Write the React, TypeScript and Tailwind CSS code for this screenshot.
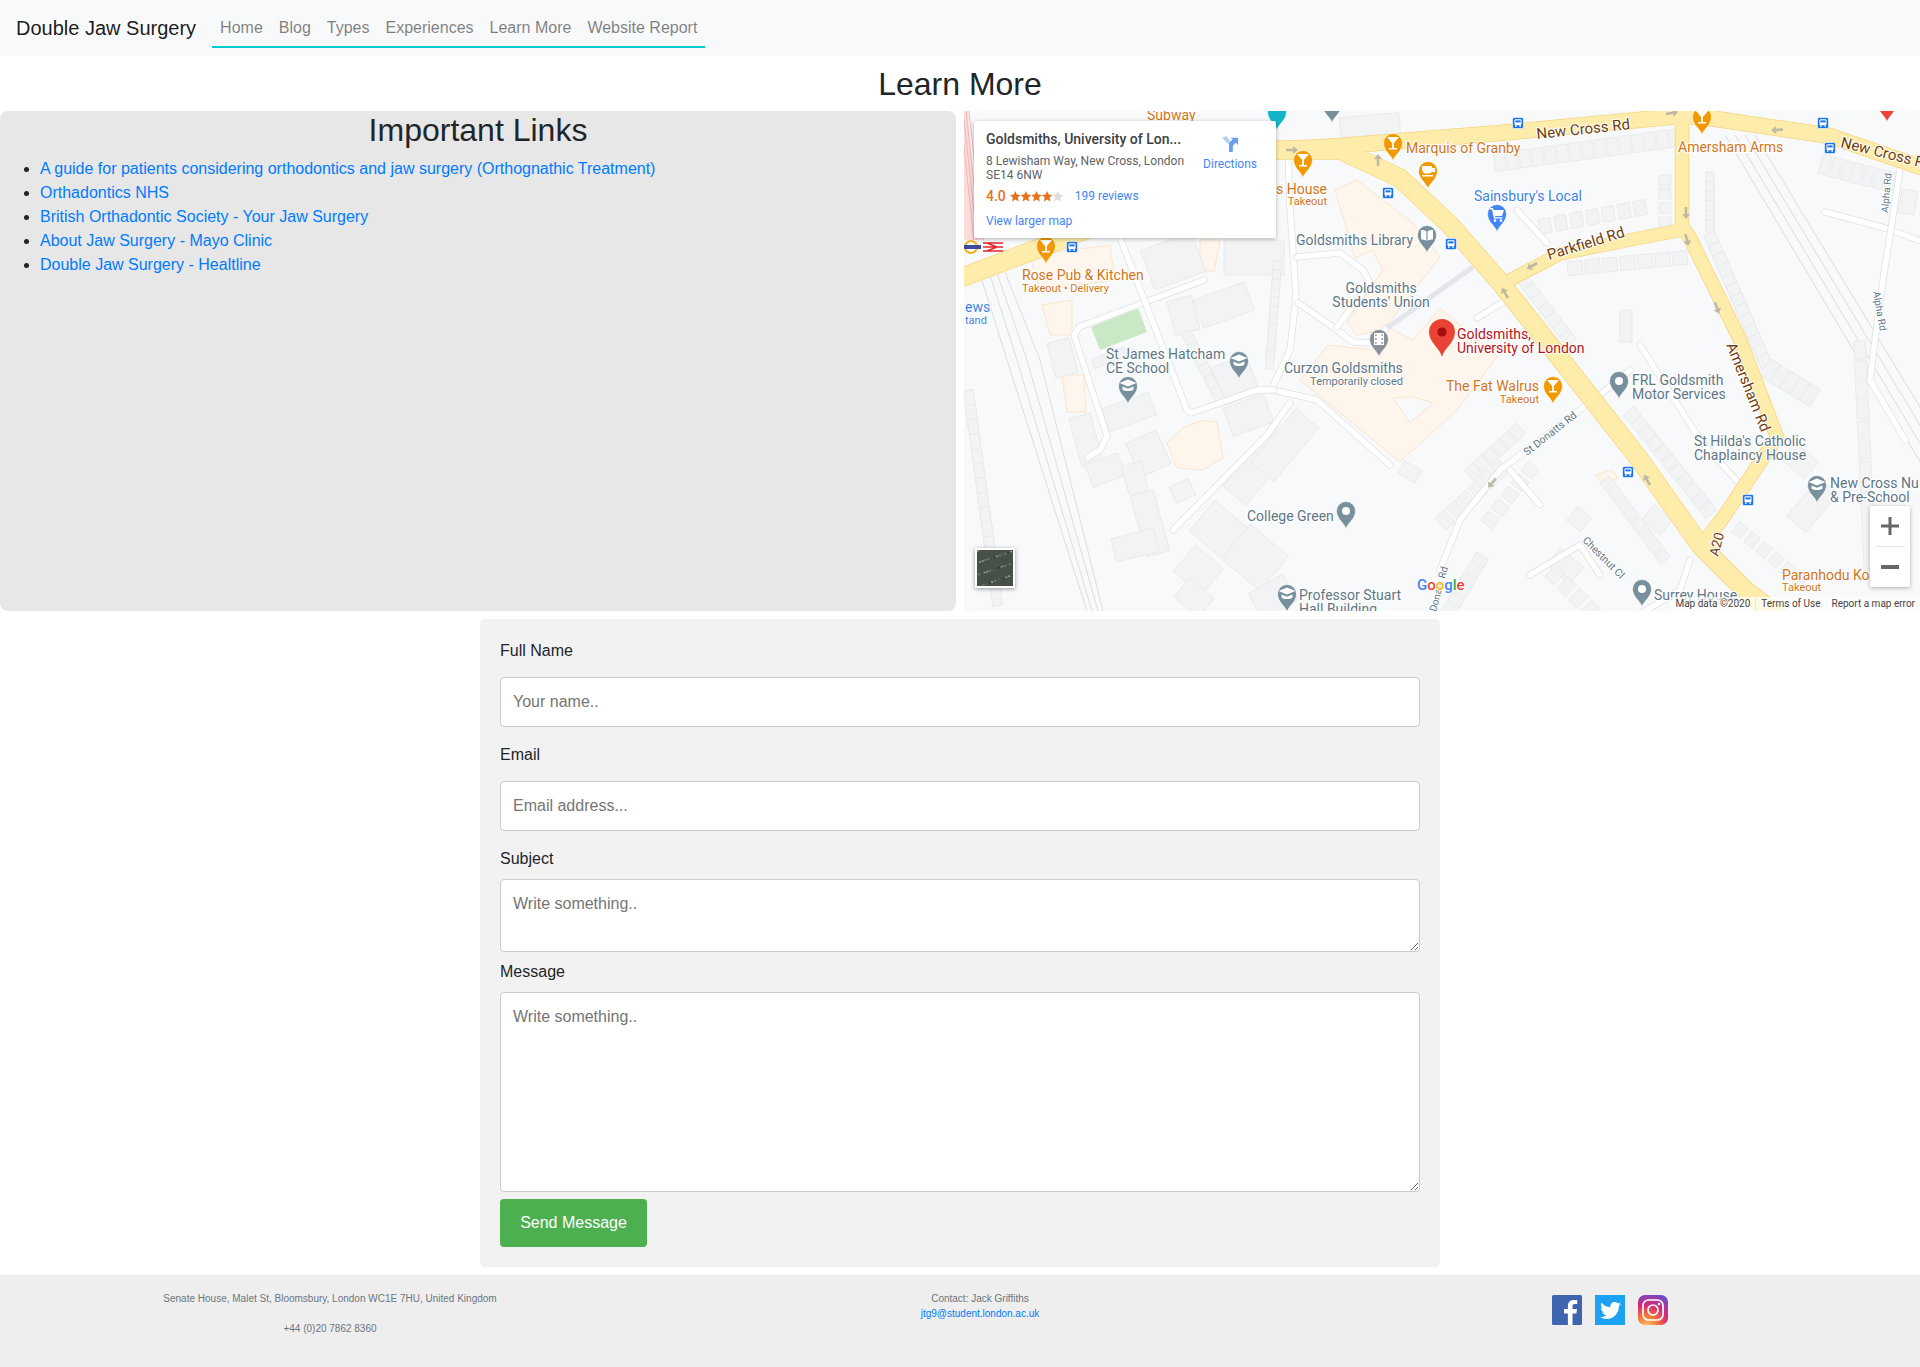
import React from "react";
import { FaTwitter } from "react-icons/fa";

const navLinks = ["Home", "Blog", "Types", "Experiences", "Learn More", "Website Report"];

const importantLinks = [
  "A guide for patients considering orthodontics and jaw surgery (Orthognathic Treatment)",
  "Orthadontics NHS",
  "British Orthadontic Society - Your Jaw Surgery",
  "About Jaw Surgery - Mayo Clinic",
  "Double Jaw Surgery - Healtline",
];

// Map colours
const ORANGE = "#d0761a";
const SLATE = "#5e7686";
const BROWN = "#6f3c0d";
const ROAD = "#feedaa";
const ROAD_EDGE = "#f6d382";
const PIN_ORANGE = "#f29900";
const PIN_SLATE = "#78909c";
const PEACH = "#fef5ec";
const PEACH_EDGE = "#fbe5cc";

const yellowRoads = [
  { d: "M955,280 L1045,246 L1110,220 L1270,150 L1340,150 L1400,178 L1450,225 L1500,282 L1640,460 L1700,545 L1745,590 L1800,632", w: 18 },
  { d: "M1270,150 L1340,146 L1500,133 L1680,116 L1710,118 L1830,136 L1935,172", w: 15 },
  { d: "M1682,118 L1682,226 L1690,238 L1740,340 L1777,437 L1725,515 L1700,548", w: 13 },
  { d: "M1500,285 L1560,254 L1640,238 L1682,230", w: 12 },
];

const whiteStreets = [
  "M1288,150 L1290,207 L1296,297 L1290,350 L1272,388",
  "M1298,303 L1333,327 L1353,342 L1373,343 L1387,328",
  "M1297,257 L1340,253 L1363,270 L1370,283 L1337,327",
  "M1273,390 L1317,400 L1390,465",
  "M1290,403 L1267,435 L1173,530",
  "M1477,318 L1503,302",
  "M1517,210 L1547,243",
  "M1204,280 L1079,327 L1074,335 L1107,436 L1100,450 L1088,457",
  "M1121,240 L1187,410 L1191,413 L1257,390 L1274,390",
  "M1440,570 L1460,520 L1500,470 L1600,395 L1630,370",
  "M1510,470 L1540,505",
  "M1530,575 L1580,545 L1600,575",
  "M1640,345 L1700,440 L1745,490",
  "M1825,212 L1885,228 L1935,246",
  "M1900,170 L1880,300 L1870,380 L1905,440",
  "M1690,560 L1680,590 L1630,620",
];

const railLines = [
  "M981,277 L1007,360 L1087,611",
  "M990,275 L1017,360 L1092,611",
  "M997,273 L1027,360 L1098,611",
  "M1005,272 L1040,360 L1103,611",
  "M1725,135 L1925,470",
  "M1735,135 L1930,460",
  "M1745,135 L1935,450",
  "M1755,135 L1940,440",
];

const terraces = [
  { x1: 1500, y1: 162, x2: 1675, y2: 138, n: 15, w: 11, h: 18 },
  { x1: 1545, y1: 226, x2: 1640, y2: 208, n: 7, w: 12, h: 15 },
  { x1: 1575, y1: 268, x2: 1680, y2: 258, n: 7, w: 15, h: 14 },
  { x1: 1710, y1: 182, x2: 1710, y2: 230, n: 6, w: 20, h: 8 },
  { x1: 1712, y1: 240, x2: 1765, y2: 362, n: 13, w: 14, h: 12 },
  { x1: 1665, y1: 180, x2: 1665, y2: 222, n: 4, w: 10, h: 12 },
  { x1: 1825, y1: 165, x2: 1890, y2: 182, n: 7, w: 9, h: 20 },
  { x1: 1525, y1: 282, x2: 1568, y2: 338, n: 7, w: 12, h: 12 },
  { x1: 1632, y1: 415, x2: 1708, y2: 510, n: 11, w: 11, h: 14 },
  { x1: 1608, y1: 484, x2: 1662, y2: 556, n: 8, w: 11, h: 12 },
  { x1: 1473, y1: 472, x2: 1517, y2: 432, n: 6, w: 11, h: 14 },
  { x1: 1445, y1: 520, x2: 1500, y2: 470, n: 6, w: 12, h: 16 },
  { x1: 1490, y1: 520, x2: 1530, y2: 470, n: 5, w: 12, h: 14 },
  { x1: 1450, y1: 610, x2: 1480, y2: 560, n: 6, w: 10, h: 14 },
  { x1: 1740, y1: 530, x2: 1800, y2: 580, n: 6, w: 11, h: 13 },
  { x1: 1770, y1: 370, x2: 1810, y2: 395, n: 5, w: 12, h: 20 },
  { x1: 970, y1: 403, x2: 996, y2: 593, n: 14, w: 26, h: 10 },
  { x1: 1277, y1: 270, x2: 1270, y2: 360, n: 11, w: 18, h: 8 },
  { x1: 1190, y1: 340, x2: 1218, y2: 395, n: 6, w: 18, h: 10 },
  { x1: 1555, y1: 575, x2: 1590, y2: 610, n: 4, w: 12, h: 16 },
  { x1: 1860, y1: 350, x2: 1870, y2: 570, n: 12, w: 18, h: 12 },
];

// x, y, w, h, rotation
const blocks = [
  [1051, 340, 23, 36, -15],
  [1075, 415, 22, 50, -15],
  [1104, 400, 50, 24, -20],
  [1092, 353, 35, 10, -20],
  [1171, 298, 25, 35, -15],
  [1197, 290, 54, 30, -20],
  [1146, 240, 54, 42, -20],
  [1224, 240, 60, 35, 0],
  [1217, 360, 37, 40, -20],
  [1227, 400, 43, 30, -20],
  [1132, 435, 33, 37, -25],
  [1088, 458, 35, 24, -20],
  [1125, 463, 20, 30, -15],
  [1138, 492, 24, 63, -15],
  [1113, 533, 44, 24, -15],
  [1172, 482, 21, 18, -25],
  [1245, 425, 30, 80, 40],
  [1270, 410, 30, 70, 40],
  [1195, 515, 60, 40, 40],
  [1230, 535, 50, 45, 40],
  [1180, 553, 37, 34, 40],
  [1178, 585, 32, 25, 40],
  [1253, 582, 40, 30, -30],
  [1400, 465, 20, 14, 30],
  [1800, 480, 25, 50, 40],
  [1785, 450, 30, 22, 40],
  [1900, 190, 16, 24, 10],
  [1620, 310, 12, 32, 0],
  [1660, 180, 10, 10, 0],
  [1340, 115, 60, 25, -5],
  [1550, 555, 30, 22, 40],
  [1645, 510, 24, 20, 40],
  [1570, 510, 18, 18, 40],
];

const busStops = [
  [1388, 193],
  [1072, 247],
  [1518, 123],
  [1823, 123],
  [1830, 148],
  [1451, 244],
  [1628, 472],
  [1748, 500],
];

const arrows = [
  [1686, 213, 180],
  [1687, 240, 165],
  [1717, 308, 160],
  [1532, 266, 240],
  [1505, 293, 330],
  [1647, 480, 330],
  [1777, 130, 265],
  [1672, 113, 80],
  [1378, 160, 0],
  [1292, 150, 90],
  [1492, 483, 220],
];

type TextProps = {
  x: number;
  y: number;
  fill?: string;
  size?: number;
  anchor?: "start" | "middle" | "end";
  weight?: number;
  rotate?: number;
  children: React.ReactNode;
};

const MapText = ({ x, y, fill = SLATE, size = 14, anchor = "start", weight = 400, rotate = 0, children }: TextProps) => (
  <text
    x={x}
    y={y}
    fill={fill}
    fontSize={size}
    fontWeight={weight}
    textAnchor={anchor}
    stroke="#fff"
    strokeWidth={2}
    paintOrder="stroke"
    strokeLinejoin="round"
    transform={rotate ? `rotate(${rotate} ${x} ${y})` : undefined}
  >
    {children}
  </text>
);

type Glyph = "dot" | "martini" | "cup" | "cap" | "book" | "film" | "cart" | "none";

const Pin = ({ x, y, color, glyph = "dot" }: { x: number; y: number; color: string; glyph?: Glyph }) => (
  <g transform={`translate(${x} ${y})`}>
    <path
      d="M0 0 C-1.5 -6 -9.5 -10 -9.5 -18 A9.5 9.5 0 1 1 9.5 -18 C9.5 -10 1.5 -6 0 0 Z"
      fill={color}
      stroke="#fff"
      strokeWidth={0.6}
    />
    {glyph === "dot" && <circle cx={0} cy={-18} r={4} fill="#fff" />}
    {glyph === "martini" && <path d="M-6 -24 H6 L0.9 -18 V-13 H4 V-11.5 H-4 V-13 H-0.9 V-18 Z" fill="#fff" />}
    {glyph === "cup" && <path d="M-6 -23 H4 V-21 H7 V-17 H3.5 C3 -16 2 -15.5 0 -15.5 H-2 C-5 -15.5 -6 -18 -6 -20 Z M-6 -14 H5 V-12.5 H-6 Z" fill="#fff" />}
    {glyph === "cap" && <path d="M0 -24.5 L8.5 -21 L0 -17.5 L-8.5 -21 Z M-5.5 -17.5 L0 -15.2 L5.5 -17.5 V-14.5 C3 -12.5 -3 -12.5 -5.5 -14.5 Z" fill="#fff" />}
    {glyph === "book" && <path d="M-6 -23 C-3 -23 -1 -22.5 -0.6 -21.5 V-12 C-1.5 -13 -3.5 -13.5 -6 -13.5 Z M6 -23 C3 -23 1 -22.5 0.6 -21.5 V-12 C1.5 -13 3.5 -13.5 6 -13.5 Z" fill="#fff" />}
    {glyph === "film" && <path d="M-5 -24 H5 V-12 H-5 Z M-3.8 -22.8 V-21 H-2.4 V-22.8 Z M2.4 -22.8 V-21 H3.8 V-22.8 Z M-3.8 -19 V-17 H-2.4 V-19 Z M2.4 -19 V-17 H3.8 V-19 Z M-3.8 -15 V-13.2 H-2.4 V-15 Z M2.4 -15 V-13.2 H3.8 V-15 Z" fill="#fff" fillRule="evenodd" />}
    {glyph === "cart" && <path d="M-7 -24 H-4 L-3.4 -22 H7 L5 -16 H-2 L-1.6 -14.8 H5.5 V-13.4 H-3 L-5 -22.6 H-7 Z M-2 -12.8 A1.4 1.4 0 1 0 -2 -10 A1.4 1.4 0 1 0 -2 -12.8 Z M4 -12.8 A1.4 1.4 0 1 0 4 -10 A1.4 1.4 0 1 0 4 -12.8 Z" fill="#fff" />}
  </g>
);

const BusStop = ({ x, y }: { x: number; y: number }) => (
  <g transform={`translate(${x} ${y})`}>
    <rect x={-5.5} y={-5.5} width={11} height={11} rx={1.5} fill="#1a73e8" stroke="#fff" strokeWidth={0.6} />
    <rect x={-3.5} y={-3.8} width={7} height={6} rx={1} fill="#fff" />
    <rect x={-2.6} y={-2.6} width={5.2} height={2} fill="#1a73e8" />
    <rect x={-3} y={2.4} width={1.6} height={1.4} fill="#fff" />
    <rect x={1.4} y={2.4} width={1.6} height={1.4} fill="#fff" />
  </g>
);

const Terrace = ({ x1, y1, x2, y2, n, w, h }: (typeof terraces)[number]) => {
  const angle = (Math.atan2(y2 - y1, x2 - x1) * 180) / Math.PI;
  return (
    <>
      {Array.from({ length: n }).map((_, i) => {
        const t = n > 1 ? i / (n - 1) : 0;
        const cx = x1 + (x2 - x1) * t;
        const cy = y1 + (y2 - y1) * t;
        return (
          <rect
            key={i}
            x={-w / 2}
            y={-h / 2}
            width={w}
            height={h}
            fill="#f1f3f4"
            stroke="#e4e6e8"
            strokeWidth={0.7}
            transform={`translate(${cx} ${cy}) rotate(${angle})`}
          />
        );
      })}
    </>
  );
};

const MapDrawing = () => (
  <svg viewBox="964 111 956 500" className="absolute inset-0 w-full h-full" fontFamily="Roboto, sans-serif">
    <rect x={964} y={111} width={956} height={500} fill="#f8f9fa" />

    {/* campus */}
    <path
      d="M1335,190 L1355,258 L1372,250 L1383,270 L1347,323 L1357,335 L1383,330 L1440,257 L1413,223 L1357,180 Z"
      fill={PEACH}
      stroke={PEACH_EDGE}
    />
    <path
      d="M1300,380 L1328,345 L1373,350 L1390,328 L1413,340 L1440,308 L1497,357 L1457,410 L1400,462 Z"
      fill={PEACH}
      stroke={PEACH_EDGE}
    />
    <path d="M1393,398 L1410,423 L1433,403 L1413,397 Z" fill="#f8f9fa" stroke={PEACH_EDGE} />
    <path d="M1167,443 L1183,428 L1203,420 L1217,422 L1223,458 L1203,470 L1177,468 Z" fill={PEACH} stroke={PEACH_EDGE} />
    <path d="M1042,305 L1072,300 L1072,335 L1050,335 Z M1062,375 H1084 L1086,412 H1067 Z" fill={PEACH} stroke={PEACH_EDGE} />
    <path d="M1200,240 H1220 L1214,272 L1200,268 Z M1030,255 L1110,245 L1115,280 L1040,290 Z M1596,475 L1612,470 L1618,478 L1602,484 Z" fill={PEACH} stroke={PEACH_EDGE} />
    <path d="M1091,327 L1138,308 L1147,332 L1100,350 Z" fill="#cbe8c6" />

    {/* railway strip on the left */}
    <path d="M964,111 H968 L977,240 H964 Z" fill="#fbdcdc" />
    {[966, 969, 972, 975].map((x) => (
      <path key={x} d={`M${x - 6},111 L${x + 8},240`} stroke="#f6b4b4" strokeWidth={1} fill="none" />
    ))}
    {railLines.map((d) => (
      <path key={d} d={d} stroke="#dadce0" strokeWidth={1} fill="none" />
    ))}

    {blocks.map(([x, y, w, h, r], i) => (
      <rect key={i} x={x} y={y} width={w} height={h} fill="#f1f3f4" stroke="#e4e6e8" strokeWidth={0.7} transform={`rotate(${r} ${x + w / 2} ${y + h / 2})`} />
    ))}
    {terraces.map((t, i) => (
      <Terrace key={i} {...t} />
    ))}

    {whiteStreets.map((d) => (
      <g key={d} fill="none" strokeLinecap="round" strokeLinejoin="round">
        <path d={d} stroke="#dfe1e5" strokeWidth={7} />
        <path d={d} stroke="#fff" strokeWidth={5.5} />
      </g>
    ))}
    <path d="M1387,328 L1473,267" stroke="#e3e5ec" strokeWidth={5} fill="none" />

    {yellowRoads.map(({ d, w }) => (
      <path key={d} d={d} stroke={ROAD_EDGE} strokeWidth={w + 1.5} fill="none" strokeLinejoin="round" />
    ))}
    {yellowRoads.map(({ d, w }) => (
      <path key={d} d={d} stroke={ROAD} strokeWidth={w} fill="none" strokeLinejoin="round" />
    ))}

    {arrows.map(([x, y, r], i) => (
      <path key={i} d="M0 -6 L4 -1 H1.3 V6 H-1.3 V-1 H-4 Z" fill="#bdb9a2" transform={`translate(${x} ${y}) rotate(${r})`} />
    ))}

    {busStops.map(([x, y]) => (
      <BusStop key={`${x}-${y}`} x={x} y={y} />
    ))}

    {/* station icons */}
    <circle cx={971} cy={247} r={6} fill="#fff" stroke="#f2b01e" strokeWidth={2} />
    <rect x={964} y={245} width={17} height={4} fill="#3f4a9c" />
    <path d="M983,243 H1003 M983,247 H1003 M983,251 H1003 M987,243 L997,247 L987,251" stroke="#e8232e" strokeWidth={1.4} fill="none" />

    {/* road names */}
    <MapText x={1537} y={139} fill={BROWN} size={15} rotate={-6}>New Cross Rd</MapText>
    <MapText x={1840} y={147} fill={BROWN} size={15} rotate={14}>New Cross Rd</MapText>
    <MapText x={1549} y={260} fill={BROWN} size={15} rotate={-17}>Parkfield Rd</MapText>
    <MapText x={1726} y={345} fill={BROWN} size={15} rotate={68}>Amersham Rd</MapText>
    <MapText x={1718} y={557} fill={BROWN} size={13.5} rotate={-75}>A20</MapText>
    <MapText x={1527} y={456} size={10.5} rotate={-38}>St Donatts Rd</MapText>
    <MapText x={1582} y={541} size={10.5} rotate={45}>Chestnut Cl</MapText>
    <MapText x={1888} y={213} size={10} rotate={-85}>Alpha Rd</MapText>
    <MapText x={1873} y={292} size={10} rotate={80}>Alpha Rd</MapText>
    <MapText x={1436} y={612} size={10} rotate={-75}>Donats Rd</MapText>

    {/* pins */}
    <Pin x={1277} y={130} color="#12b5cb" glyph="none" />
    <Pin x={1332} y={123} color={PIN_SLATE} glyph="none" />
    <Pin x={1887} y={122} color="#ea4335" glyph="none" />
    <Pin x={1303} y={178} color={PIN_ORANGE} glyph="martini" />
    <Pin x={1393} y={161} color={PIN_ORANGE} glyph="martini" />
    <Pin x={1428} y={189} color={PIN_ORANGE} glyph="cup" />
    <Pin x={1046} y={264} color={PIN_ORANGE} glyph="martini" />
    <Pin x={1702} y={135} color={PIN_ORANGE} glyph="martini" />
    <Pin x={1553} y={404} color={PIN_ORANGE} glyph="martini" />
    <Pin x={1427} y={253} color={PIN_SLATE} glyph="book" />
    <Pin x={1379} y={357} color="#8a9199" glyph="film" />
    <Pin x={1497} y={232} color="#4285f4" glyph="cart" />
    <Pin x={1128} y={404} color={PIN_SLATE} glyph="cap" />
    <Pin x={1239} y={379} color={PIN_SLATE} glyph="cap" />
    <Pin x={1346} y={529} color={PIN_SLATE} />
    <Pin x={1619} y={399} color={PIN_SLATE} />
    <Pin x={1817} y={503} color={PIN_SLATE} glyph="cap" />
    <Pin x={1287} y={612} color={PIN_SLATE} glyph="cap" />
    <Pin x={1642} y={607} color={PIN_SLATE} />
    <g transform="translate(1442 357)">
      <path d="M0 0 C-2 -9 -13 -14 -13 -25 A13 13 0 1 1 13 -25 C13 -14 2 -9 0 0 Z" fill="#ea4335" />
      <circle cx={0} cy={-25} r={4.6} fill="#a50e0e" />
    </g>

    {/* place labels */}
    <MapText x={1147} y={120} fill={ORANGE}>Subway</MapText>
    <MapText x={1276} y={194} fill={ORANGE}>s House</MapText>
    <MapText x={1327} y={205} fill={ORANGE} size={11} anchor="end">Takeout</MapText>
    <MapText x={1406} y={153} fill={ORANGE}>Marquis of Granby</MapText>
    <MapText x={1678} y={152} fill={ORANGE}>Amersham Arms</MapText>
    <MapText x={1474} y={201} fill="#3b82e8">Sainsbury's Local</MapText>
    <MapText x={1296} y={245}>Goldsmiths Library</MapText>
    <MapText x={1381} y={293} anchor="middle">Goldsmiths</MapText>
    <MapText x={1381} y={307} anchor="middle">Students' Union</MapText>
    <MapText x={1022} y={280} fill={ORANGE}>Rose Pub &amp; Kitchen</MapText>
    <MapText x={1022} y={292} fill={ORANGE} size={11}>Takeout • Delivery</MapText>
    <MapText x={965} y={312} fill="#3b82e8">ews</MapText>
    <MapText x={965} y={324} fill="#3b82e8" size={11}>tand</MapText>
    <MapText x={1106} y={359}>St James Hatcham</MapText>
    <MapText x={1106} y={373}>CE School</MapText>
    <MapText x={1284} y={373}>Curzon Goldsmiths</MapText>
    <MapText x={1403} y={385} size={11} anchor="end">Temporarily closed</MapText>
    <MapText x={1457} y={339} fill="#b3141d">Goldsmiths,</MapText>
    <MapText x={1457} y={353} fill="#b3141d">University of London</MapText>
    <MapText x={1446} y={391} fill={ORANGE}>The Fat Walrus</MapText>
    <MapText x={1539} y={403} fill={ORANGE} size={11} anchor="end">Takeout</MapText>
    <MapText x={1632} y={385}>FRL Goldsmith</MapText>
    <MapText x={1632} y={399}>Motor Services</MapText>
    <MapText x={1694} y={446}>St Hilda's Catholic</MapText>
    <MapText x={1694} y={460}>Chaplaincy House</MapText>
    <MapText x={1247} y={521}>College Green</MapText>
    <MapText x={1830} y={488}>New Cross Nu</MapText>
    <MapText x={1830} y={502}>&amp; Pre-School</MapText>
    <MapText x={1299} y={600}>Professor Stuart</MapText>
    <MapText x={1299} y={614}>Hall Building</MapText>
    <MapText x={1654} y={600}>Surrey House</MapText>
    <MapText x={1782} y={580} fill={ORANGE}>Paranhodu Ko</MapText>
    <MapText x={1782} y={591} fill={ORANGE} size={11}>Takeout</MapText>

    {/* google wordmark */}
    <text x={1417} y={590} fontSize={15} fontWeight={500} stroke="#fff" strokeWidth={1.5} paintOrder="stroke">
      <tspan fill="#4285f4">G</tspan>
      <tspan fill="#ea4335">o</tspan>
      <tspan fill="#fbbc05">o</tspan>
      <tspan fill="#4285f4">g</tspan>
      <tspan fill="#34a853">l</tspan>
      <tspan fill="#ea4335">e</tspan>
    </text>
  </svg>
);

const satellitePatches = Array.from({ length: 220 }).map((_, i) => ({
  x: (i * 17) % 38,
  y: (i * 7) % 38,
  c: ["#3a4640", "#8b938e", "#2c3a2f", "#6d7873", "#4f6a3e", "#a3aaa6", "#39423c"][i % 7],
}));

const SatelliteThumb = () => (
  <div className="absolute left-[11px] top-[437px] w-10 h-10 border-2 border-white shadow-[0_1px_4px_rgba(0,0,0,0.4)] bg-[#475048]">
    <svg viewBox="0 0 38 38" className="w-full h-full">
      {satellitePatches.map((p, i) => (
        <rect key={i} x={p.x} y={p.y} width={2} height={1.5} fill={p.c} />
      ))}
    </svg>
  </div>
);

const Stars = () => (
  <svg viewBox="0 0 53 11" className="w-[53px] h-[11px] ml-[4px]">
    {[0, 1, 2, 3, 4].map((i) => (
      <path
        key={i}
        transform={`translate(${i * 10.6} 0)`}
        d="M5.3 0 L6.9 3.6 L10.6 4 L7.8 6.6 L8.6 10.6 L5.3 8.6 L2 10.6 L2.8 6.6 L0 4 L3.7 3.6 Z"
        fill={i < 4 ? "#e7711b" : "#dadce0"}
      />
    ))}
  </svg>
);

const InfoCard = () => (
  <div className="absolute left-[10px] top-[10px] w-[302px] h-[117px] bg-white rounded-[2px] shadow-[0_1px_4px_rgba(0,0,0,0.3)] font-['Roboto',sans-serif] flex justify-between pl-3 pr-[19px] pt-2">
    <div className="w-[205px]">
      <p className="text-[14px] leading-[20px] font-medium text-[#3c4043] whitespace-nowrap">Goldsmiths, University of Lon...</p>
      <p className="text-[12px] leading-[14px] text-[#5f6368] mt-[5px] whitespace-nowrap">8 Lewisham Way, New Cross, London</p>
      <p className="text-[12px] leading-[14px] text-[#5f6368]">SE14 6NW</p>
      <div className="flex items-center mt-[6px] h-[16px]">
        <span className="text-[14px] font-medium text-[#e7711b]">4.0</span>
        <Stars />
        <span className="text-[12px] text-[#4285f4] ml-[12px]">199 reviews</span>
      </div>
      <p className="text-[12px] leading-[14px] text-[#4285f4] mt-[10px]">View larger map</p>
    </div>
    <div className="flex flex-col items-center pt-[6px]">
      <svg viewBox="0 0 20 20" className="w-[18px] h-[18px]">
        <path d="M1 3 L9 11 V19 H13 V10 L6 1 Z" fill="#b6d2f6" />
        <path d="M9 19 V11 C9 8 11 7 13 5 L10.5 3 H19 V11 L16.5 8.5 C14.5 10.5 13 11 13 13 V19 Z" fill="#6a9ee8" />
      </svg>
      <span className="text-[12px] leading-[14px] text-[#4285f4] mt-1">Directions</span>
    </div>
  </div>
);

const ZoomControl = () => (
  <div className="absolute right-[10px] top-[395px] w-10 h-[81px] bg-white rounded-[2px] shadow-[0_1px_4px_rgba(0,0,0,0.3)] flex flex-col items-center">
    <div className="h-10 flex items-center justify-center w-full">
      <svg viewBox="0 0 18 18" className="w-[18px] h-[18px]">
        <path d="M7.5 0 H10.5 V7.5 H18 V10.5 H10.5 V18 H7.5 V10.5 H0 V7.5 H7.5 Z" fill="#666" />
      </svg>
    </div>
    <div className="w-[30px] h-px bg-[#e6e6e6]" />
    <div className="h-10 flex items-center justify-center w-full">
      <div className="w-[18px] h-[4px] bg-[#666]" />
    </div>
  </div>
);

const Attribution = () => (
  <div className="absolute right-0 bottom-0 flex gap-px text-[10px] leading-[14px] text-[#444] font-['Roboto',sans-serif]">
    <span className="bg-white/70 px-[5px]">Map data ©2020</span>
    <span className="bg-white/70 px-[5px]">Terms of Use</span>
    <span className="bg-white/70 px-[5px]">Report a map error</span>
  </div>
);

const FacebookIcon = () => (
  <svg viewBox="0 0 30 30" className="w-[30px] h-[30px]">
    <rect width={30} height={30} rx={1.5} fill="#3f65b0" />
    <path d="M20.5 30 V18.5 H24.4 L25 14 H20.5 V11.2 C20.5 9.9 20.9 9 22.8 9 H25.2 V5.1 C24.8 5 23.4 4.9 21.8 4.9 C18.3 4.9 15.9 7 15.9 10.9 V14 H12 V18.5 H15.9 V30 Z" fill="#fff" />
  </svg>
);

const InstagramIcon = () => (
  <svg viewBox="0 0 30 30" className="w-[30px] h-[30px]">
    <defs>
      <radialGradient id="ig" cx="0.3" cy="1.05" r="1.2">
        <stop offset="0" stopColor="#fdc468" />
        <stop offset="0.3" stopColor="#f77737" />
        <stop offset="0.6" stopColor="#d62976" />
        <stop offset="1" stopColor="#5b51d8" />
      </radialGradient>
    </defs>
    <rect width={30} height={30} rx={7} fill="url(#ig)" />
    <rect x={5} y={5} width={20} height={20} rx={5.5} fill="none" stroke="#fff" strokeWidth={1.7} />
    <circle cx={15} cy={15} r={5} fill="none" stroke="#fff" strokeWidth={1.7} />
    <circle cx={21} cy={9} r={1.2} fill="#fff" />
  </svg>
);

const labelClass = "block text-base leading-6 text-[#212529] mb-2";
const fieldClass =
  "block w-full border border-[#ccc] rounded bg-white px-3 text-base text-[#212529] placeholder:text-[#757575] font-['Liberation_Sans',Arial,sans-serif]";

const App = () => {
  return (
    <div className="bg-white min-h-[1367px] font-['Liberation_Sans',Arial,sans-serif] text-[#212529]">
      {/* Navbar */}
      <nav className="bg-[#f8f9fa] h-14 flex items-center px-4">
        <a className="text-xl text-black/90 mr-4 whitespace-nowrap">Double Jaw Surgery</a>
        <ul className="flex border-b-2 border-[#00cccc] mt-[-2px]">
          {navLinks.map((link) => (
            <li key={link}>
              <a className="block px-2 pt-[10px] pb-[6px] text-base leading-6 text-black/50">{link}</a>
            </li>
          ))}
        </ul>
      </nav>

      <h1 className="text-[32px] leading-[39px] text-center mt-[9px] mb-[7px]">Learn More</h1>

      {/* Links + map */}
      <div className="flex gap-2 h-[500px]">
        <div className="w-[956px] bg-[#e7e7e7] rounded-lg">
          <h2 className="text-[32px] leading-[38px] text-center mb-2">Important Links</h2>
          <ul className="list-disc pl-10">
            {importantLinks.map((link) => (
              <li key={link} className="text-base leading-6">
                <a className="text-[#007bff]">{link}</a>
              </li>
            ))}
          </ul>
        </div>
        <div className="relative w-[956px] overflow-hidden">
          <MapDrawing />
          <InfoCard />
          <SatelliteThumb />
          <ZoomControl />
          <Attribution />
        </div>
      </div>

      {/* Contact form */}
      <form className="w-[960px] mx-auto mt-2 bg-[#f2f2f2] rounded-[5px] p-5">
        <label className={labelClass}>Full Name</label>
        <input className={`${fieldClass} h-[50px] mt-[14px] mb-4`} placeholder="Your name.." />
        <label className={labelClass}>Email</label>
        <input className={`${fieldClass} h-[50px] mt-[14px] mb-4`} placeholder="Email address..." />
        <label className={labelClass}>Subject</label>
        <textarea className={`${fieldClass} h-[73px] py-3 mb-2`} placeholder="Write something.." />
        <label className={labelClass}>Message</label>
        <textarea className={`${fieldClass} h-[200px] py-3 mb-[7px]`} placeholder="Write something.." />
        <button type="button" className="w-[147px] h-12 bg-[#4caf50] text-white text-base rounded">
          Send Message
        </button>
      </form>

      {/* Footer */}
      <footer className="mt-2 h-[92px] bg-[#eeeeee] grid grid-cols-[660px_640px_1fr] text-[10px] leading-[15px] text-[#6c757d]">
        <div className="text-center pt-4">
          <p>Senate House, Malet St, Bloomsbury, London WC1E 7HU, United Kingdom</p>
          <p className="mt-[15px]">+44 (0)20 7862 8360</p>
        </div>
        <div className="text-center pt-4">
          <p>Contact: Jack Griffiths</p>
          <a className="text-[#007bff]">jtg9@student.london.ac.uk</a>
        </div>
        <div className="flex justify-center gap-[13px] pt-5">
          <FacebookIcon />
          <div className="w-[30px] h-[30px] bg-[#1da1f2] flex items-center justify-center">
            <FaTwitter className="w-[21px] h-[21px] text-white" />
          </div>
          <InstagramIcon />
        </div>
      </footer>
    </div>
  );
};

export default App;
